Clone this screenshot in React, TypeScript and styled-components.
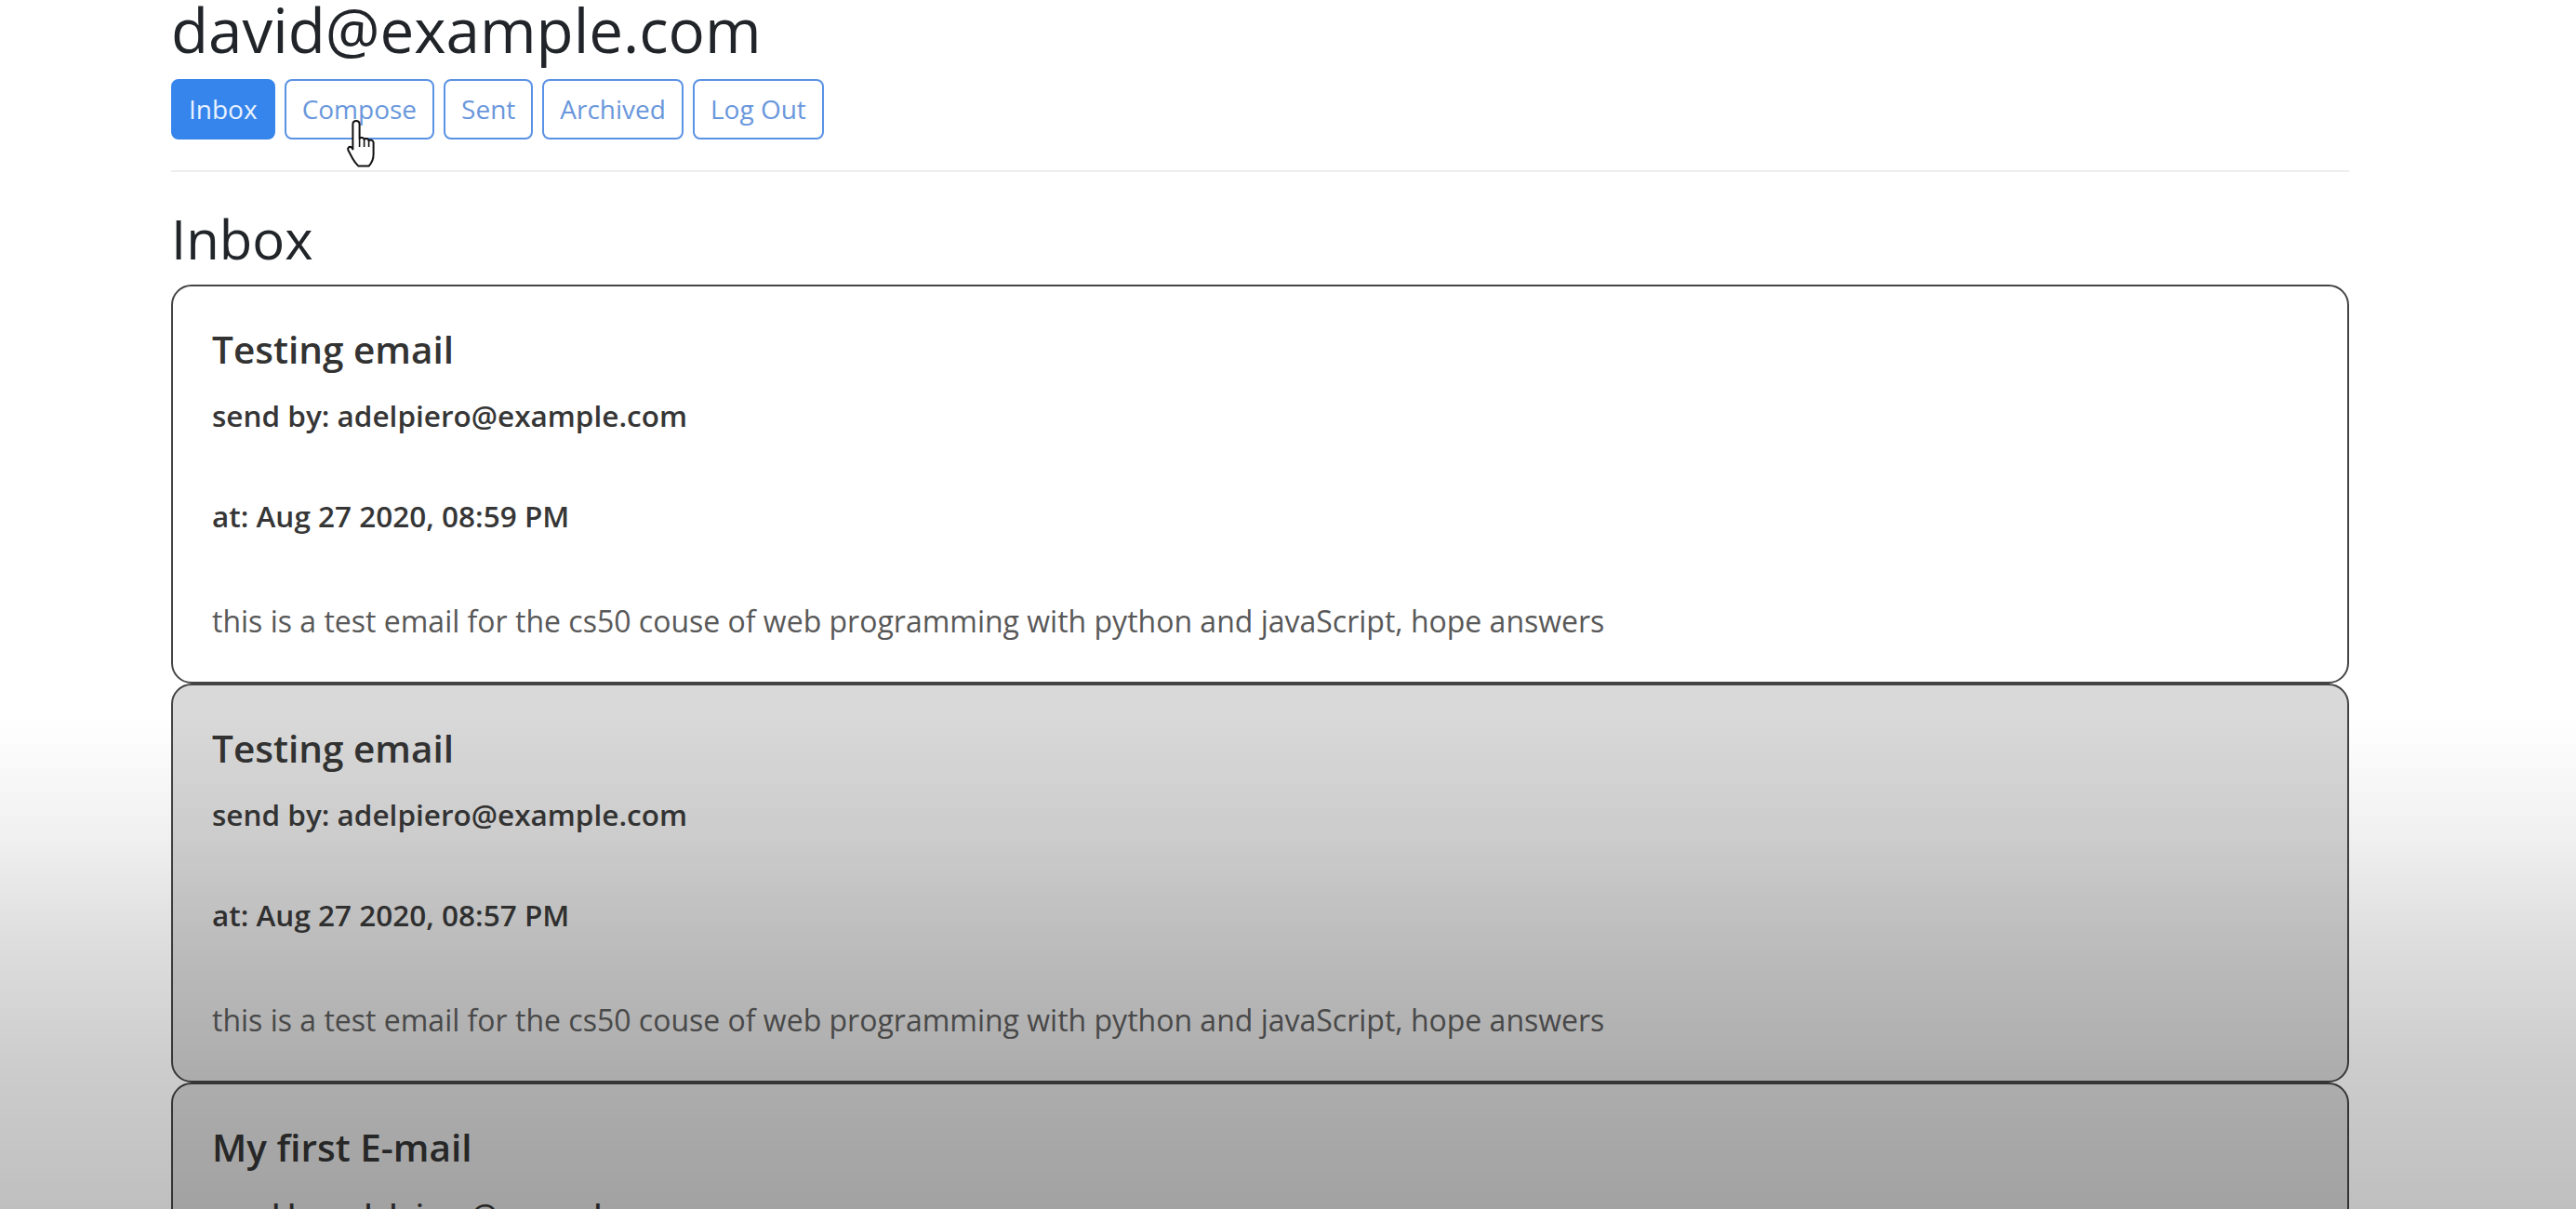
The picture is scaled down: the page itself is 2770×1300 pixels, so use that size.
import React from "react";
import styled, { createGlobalStyle } from "styled-components";

const GlobalStyle = createGlobalStyle`
  html, body {
    margin: 0;
    padding: 0;
    overflow: hidden;
    background: #ffffff;
  }
  body {
    font-family: "Open Sans", "Noto Sans", "Liberation Sans", sans-serif;
    color: #212529;
  }
  * { box-sizing: border-box; }
`;

const Page = styled.div`
  position: relative;
  width: 2770px;
  height: 1300px;
  padding-left: 184px;
  overflow: hidden;
`;

const Column = styled.div`
  width: 2342px;
  display: flex;
  flex-direction: column;
`;

const UserTitle = styled.h2`
  margin: 2px 0 0;
  font-size: 65.5px;
  font-weight: 400;
  line-height: 60px;
  color: #212529;
`;

const NavBar = styled.nav`
  margin-top: 23px;
  display: flex;
  gap: 10px;
`;

const NavButton = styled.button<{ $active?: boolean }>`
  height: 65px;
  padding: 0 17px;
  border-radius: 8px;
  border: 2px solid ${(p) => (p.$active ? "#3585ec" : "#5a92e4")};
  background: ${(p) => (p.$active ? "#3585ec" : "#ffffff")};
  color: ${(p) => (p.$active ? "#eaf2ff" : "#6a97dc")};
  font-family: "Open Sans", "Noto Sans", sans-serif;
  font-size: 28px;
  line-height: 41px;
  cursor: pointer;
`;

const Divider = styled.hr`
  margin: 33px 0 0;
  border: 0;
  height: 2px;
  background: #eeeeee;
`;

const SectionTitle = styled.h3`
  margin: 38px 0 15px;
  font-size: 58px;
  font-weight: 400;
  line-height: 68px;
  color: #212529;
`;

const MailList = styled.div`
  display: flex;
  flex-direction: column;
`;

const MailCard = styled.div<{ $read?: boolean }>`
  height: 429px;
  border: 2px solid #444444;
  border-radius: 22px;
  padding: 44px 44px 0 42px;
  background: ${(p) => (p.$read ? "#d9d9d9" : "#ffffff")};
  display: flex;
  flex-direction: column;
  flex-shrink: 0;
`;

const Subject = styled.h5`
  margin: 0;
  font-size: 40.5px;
  font-weight: 600;
  line-height: 48px;
  color: #333333;
`;

const Meta = styled.h6<{ $gap: number }>`
  margin: ${(p) => p.$gap}px 0 0;
  font-size: 31.5px;
  font-weight: 600;
  line-height: 40px;
  color: #363636;
`;

const BodyText = styled.p`
  margin: 70px 0 0;
  font-size: 32px;
  font-weight: 400;
  line-height: 45px;
  color: #585858;
  white-space: nowrap;
`;

const BottomShade = styled.div`
  position: fixed;
  inset: 0;
  pointer-events: none;
  background: linear-gradient(
    to bottom,
    rgba(0, 0, 0, 0) 0px,
    rgba(0, 0, 0, 0) 770px,
    rgba(0, 0, 0, 0.06) 900px,
    rgba(0, 0, 0, 0.13) 1010px,
    rgba(0, 0, 0, 0.2) 1150px,
    rgba(0, 0, 0, 0.25) 1300px
  );
`;

const Cursor = styled.svg`
  position: absolute;
  left: 372px;
  top: 128px;
  width: 36px;
  height: 54px;
  pointer-events: none;
`;

type Mail = {
  subject: string;
  sender: string;
  at: string;
  body: string;
  read: boolean;
};

const mails: Mail[] = [
  {
    subject: "Testing email",
    sender: "adelpiero@example.com",
    at: "Aug 27 2020, 08:59 PM",
    body: "this is a test email for the cs50 couse of web programming with python and javaScript, hope answers",
    read: false,
  },
  {
    subject: "Testing email",
    sender: "adelpiero@example.com",
    at: "Aug 27 2020, 08:57 PM",
    body: "this is a test email for the cs50 couse of web programming with python and javaScript, hope answers",
    read: true,
  },
  {
    subject: "My first E-mail",
    sender: "adelpiero@example.com",
    at: "Aug 27 2020, 08:40 PM",
    body: "hello",
    read: true,
  },
];

const navItems = ["Inbox", "Compose", "Sent", "Archived", "Log Out"];

export default function App() {
  return (
    <>
      <GlobalStyle />
      <Page>
        <Column>
          <UserTitle>david@example.com</UserTitle>
          <NavBar>
            {navItems.map((n) => (
              <NavButton key={n} $active={n === "Inbox"}>
                {n}
              </NavButton>
            ))}
          </NavBar>
          <Divider />
          <SectionTitle>Inbox</SectionTitle>
          <MailList>
            {mails.map((m, i) => (
              <MailCard key={i} $read={m.read}>
                <Subject>{m.subject}</Subject>
                <Meta $gap={27}>send by: {m.sender}</Meta>
                <Meta $gap={68}>at: {m.at}</Meta>
                <BodyText>{m.body}</BodyText>
              </MailCard>
            ))}
          </MailList>
        </Column>
        <Cursor viewBox="0 0 18 27">
          <path
            d="M5.5 1 C6.6 1 7.3 1.8 7.3 2.8 L7.3 10.4 C7.9 9.8 9.4 9.9 9.8 10.9 C10.4 10.2 12 10.4 12.3 11.6 C13 11 14.6 11.3 14.8 12.6 L14.8 19 C14.8 21.6 13.8 23.6 12.4 25.2 L6.6 25.2 C5.4 24 4.4 22.6 3.6 21.2 L1.2 16.8 C0.6 15.7 1.8 14.4 3 15.2 L3.7 16.2 L3.7 2.8 C3.7 1.8 4.4 1 5.5 1 Z"
            fill="#ffffff"
            stroke="#111111"
            strokeWidth="1"
            strokeLinejoin="round"
          />
          <path d="M7.3 10.4 L7.3 15 M9.8 10.9 L9.8 15 M12.3 11.6 L12.3 15" stroke="#111111" strokeWidth="0.8" fill="none" />
        </Cursor>
        <BottomShade />
      </Page>
    </>
  );
}
